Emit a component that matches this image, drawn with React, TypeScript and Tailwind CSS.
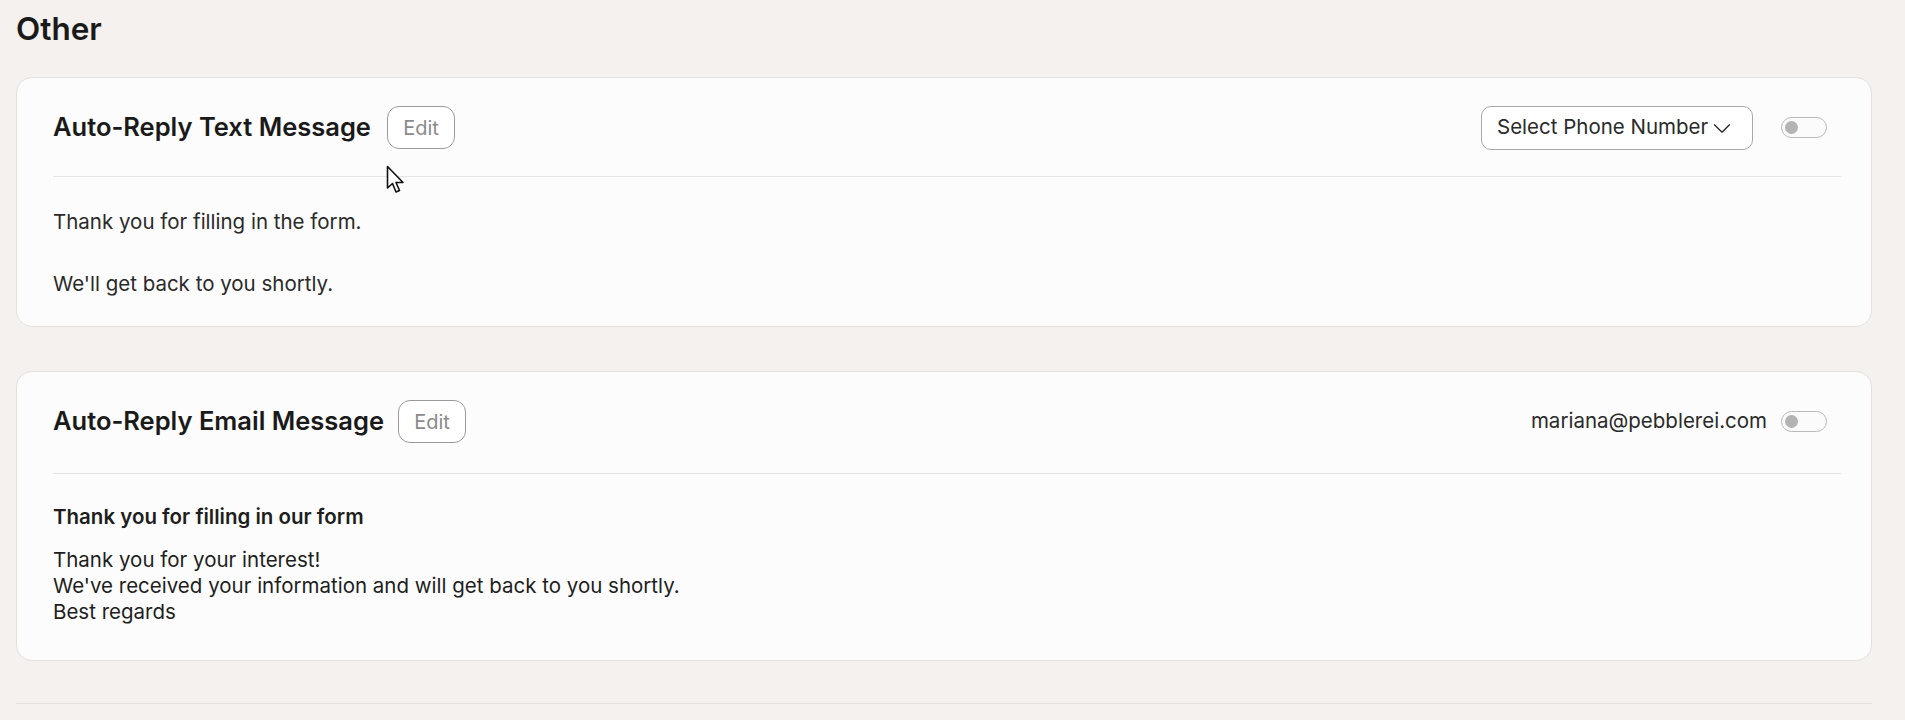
import React from "react";

function Toggle() {
  return (
    <div className="w-[46px] h-[21px] rounded-full border border-[#b9b9b9] bg-[#fbfbfb] flex items-center px-[3px]">
      <div className="w-[13px] h-[13px] rounded-full bg-[#b4b4b4]" />
    </div>
  );
}

function EditButton() {
  return (
    <button className="h-[43px] w-[68px] rounded-[12px] border border-[#9a9a9a] text-[20px] text-[#8a8a8a] bg-white flex items-center justify-center">
      Edit
    </button>
  );
}

export default function App() {
  return (
    <div
      className="min-h-[720px] bg-[#f4f1ef] px-[16px] pr-[33px] text-[#1c1c1c]"
      style={{ fontFamily: "Inter, 'Noto Sans', sans-serif" }}
    >
      <h1 className="pt-[11px] text-[31.5px] leading-[36px] font-semibold text-[#1a1a1a]">Other</h1>

      {/* Card 1 */}
      <div className="relative mt-[30px] h-[250px] rounded-[16px] border border-[#e3e1df] bg-[#fcfcfc] pl-[36px] pr-[30px] pt-[28px]">
        <div className="flex h-[43px] items-center justify-between pr-[14px]">
          <div className="flex items-center gap-[16px]">
            <h2 className="text-[25.5px] font-semibold text-[#1a1a1a]">Auto-Reply Text Message</h2>
            <EditButton />
          </div>
          <div className="flex items-center gap-[28px]">
            <button className="h-[44px] w-[272px] rounded-[10px] border border-[#a8a8a8] bg-white flex items-center pl-[15px] gap-[4px] text-[20.5px] text-[#2a2a2a]">
              Select Phone Number
              <svg width="20" height="20" viewBox="0 0 24 24" fill="none" stroke="#2a2a2a" strokeWidth="1.6" strokeLinecap="round" strokeLinejoin="round">
                <path d="M3 8l9 9 9-9" />
              </svg>
            </button>
            <Toggle />
          </div>
        </div>
        <div className="mt-[27px] h-px bg-[#e6e4e2]" />
        <div className="pt-[31px] text-[20.5px] leading-[28px] text-[#2a2a2a]">
          <p>Thank you for filling in the form.</p>
          <p className="mt-[34px]">We'll get back to you shortly.</p>
        </div>
        <svg className="absolute left-[369px] top-[87px]" width="22" height="30" viewBox="0 0 22 30">
          <path d="M1.5 1.5 L1.5 23 L6.5 18.5 L10 27 L13.5 25.5 L10 17.5 L17 17.5 Z" fill="#ffffff" stroke="#111111" strokeWidth="1.6" strokeLinejoin="round" />
        </svg>
      </div>

      {/* Card 2 */}
      <div className="mt-[44px] h-[290px] rounded-[16px] border border-[#e3e1df] bg-[#fcfcfc] pl-[36px] pr-[30px] pt-[28px]">
        <div className="flex h-[43px] items-center justify-between pr-[14px]">
          <div className="flex items-center gap-[14px]">
            <h2 className="text-[25.5px] font-semibold text-[#1a1a1a]">Auto-Reply Email Message</h2>
            <EditButton />
          </div>
          <div className="flex items-center gap-[14px]">
            <span className="text-[20.5px] text-[#2a2a2a]">mariana@pebblerei.com</span>
            <Toggle />
          </div>
        </div>
        <div className="mt-[30px] h-px bg-[#e6e4e2]" />
        <div className="pt-[30px] text-[20.5px] leading-[26px] text-[#1e1e1e]">
          <p className="font-semibold">Thank you for filling in our form</p>
          <p className="mt-[17px]">Thank you for your interest!</p>
          <p>We've received your information and will get back to you shortly.</p>
          <p>Best regards</p>
        </div>
      </div>

      <div className="mt-[42px] h-px bg-[#e4e1df]" />
    </div>
  );
}
